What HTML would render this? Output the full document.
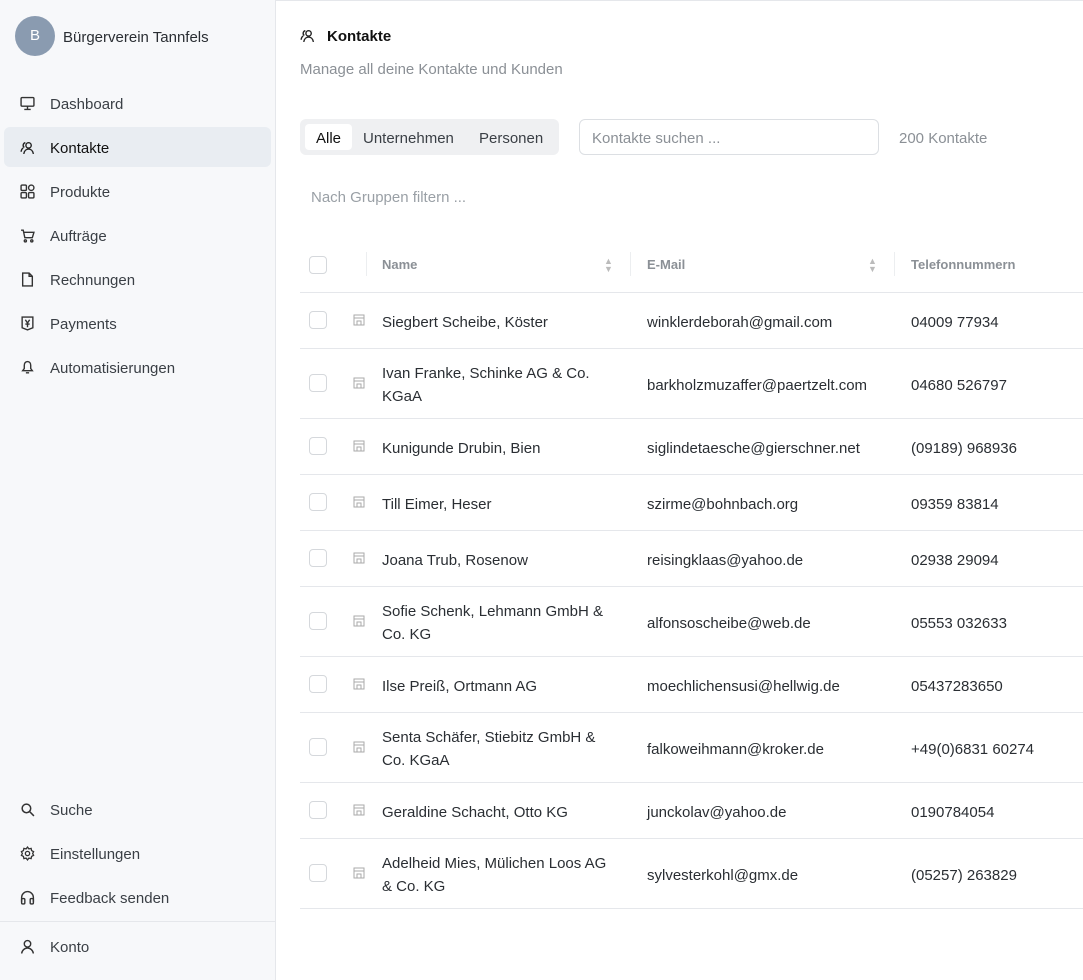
<!DOCTYPE html>
<html><head><meta charset="utf-8"><style>
*{box-sizing:border-box;margin:0;padding:0}
body{width:1083px;height:980px;font-family:"Liberation Sans",sans-serif;color:#1f2328;background:#fff;position:relative;overflow:hidden;font-size:15px}
.sb{position:absolute;left:0;top:0;width:276px;height:980px;background:#f7f8fa;border-right:1px solid #e5e7eb}
.av{position:absolute;left:15px;top:16px;width:40px;height:40px;border-radius:50%;background:#8a9bb0;color:#fff;text-align:center;line-height:40px;font-size:15px}
.org{position:absolute;left:63px;top:29px;font-size:15px;color:#2a2e33}
.nav{position:absolute;left:4px;width:267px;height:40px;border-radius:6px;line-height:44px;padding-left:46px;color:#3a3f45}
.nav svg{position:absolute;left:16px;top:13px;width:15px;height:15px}
.nav.act{background:#e9edf2;color:#111}
.sep{position:absolute;left:0;top:921px;width:275px;border-top:1px solid #e5e7eb}
.topline{position:absolute;left:276px;top:0;right:0;border-top:1px solid #e5e7eb}
.abs{position:absolute}
.muted{color:#8b9096}
.tabs{position:absolute;left:300px;top:119px;width:259px;height:36px;background:#eff0f2;border-radius:6px}
.tab{position:absolute;top:5px;height:26px;line-height:30px;font-size:15px;color:#3a3f45}
.inp{position:absolute;left:579px;top:119px;width:300px;height:36px;border:1px solid #dcdfe3;border-radius:6px;line-height:38px;padding-left:12px;color:#8b9096}
.cb{position:absolute;left:309px;width:18px;height:18px;border:1px solid #d5d8dc;border-radius:4px;background:#fff}
.hl{position:absolute;left:300px;right:0;border-top:1px solid #e5e7eb}
.th{position:absolute;top:257px;font-size:13px;font-weight:bold;color:#8b9096}
.vs{position:absolute;top:252px;height:24px;border-left:1px solid #eceef0}
.cell{position:absolute;font-size:15px;line-height:23px;color:#2a2e33}
</style></head><body>
<div class="topline"></div>
<div class="sb">
<div class="av">B</div><div class="org">Bürgerverein Tannfels</div>
<div class="nav" style="top:83px"><svg viewBox="0 0 14 14" fill="none" stroke="#333" stroke-width="1.3"><rect x="1" y="1.5" width="12" height="8" rx="1"/><path d="M7 9.5v3M4 12.5h6"/></svg>Dashboard</div>
<div class="nav act" style="top:127px"><svg viewBox="0 0 14 14" fill="none" stroke="#222" stroke-width="1.3"><circle cx="8" cy="5" r="2.5"/><path d="M3.5 13c.5-3 2.5-4.5 4.5-4.5s4 1.5 4.5 4.5M5 2.5A2.5 2.5 0 0 0 4 7M1 11c.3-2 1-3 2-3.5"/></svg>Kontakte</div>
<div class="nav" style="top:171px"><svg viewBox="0 0 14 14" fill="none" stroke="#333" stroke-width="1.3"><rect x="1" y="1" width="5" height="5" rx="1"/><rect x="1" y="8" width="5" height="5" rx="1"/><rect x="8" y="8" width="5" height="5" rx="1"/><circle cx="10.5" cy="3.5" r="2.5"/></svg>Produkte</div>
<div class="nav" style="top:215px"><svg viewBox="0 0 14 14" fill="none" stroke="#333" stroke-width="1.3"><path d="M1 2h2l1.5 7h7L13 4H4"/><circle cx="5" cy="12" r="1"/><circle cx="11" cy="12" r="1"/></svg>Aufträge</div>
<div class="nav" style="top:259px"><svg viewBox="0 0 14 14" fill="none" stroke="#333" stroke-width="1.3"><path d="M2.5 1h6l3 3v9h-9z M8.5 1v3h3"/></svg>Rechnungen</div>
<div class="nav" style="top:303px"><svg viewBox="0 0 14 14" fill="none" stroke="#333" stroke-width="1.3"><path d="M2 1h10v10l-5 2-5-2z M5 3.5l2 3 2-3M7 6.5v4M5 7.5h4"/></svg>Payments</div>
<div class="nav" style="top:347px"><svg viewBox="0 0 14 14" fill="none" stroke="#333" stroke-width="1.3"><path d="M7 1.5c-2 0-3 1.5-3 3.5v3L2.5 10h9L10 8V5c0-2-1-3.5-3-3.5zM5.5 12h3"/></svg>Automatisierungen</div>
<div class="nav" style="top:789px"><svg viewBox="0 0 14 14" fill="none" stroke="#333" stroke-width="1.4"><circle cx="6" cy="6" r="4"/><path d="M9 9l4 4"/></svg>Suche</div>
<div class="nav" style="top:833px"><svg viewBox="0 0 14 14" fill="none" stroke="#333" stroke-width="1.2"><circle cx="7" cy="7" r="2"/><path d="M7 1l1.3 1.7 2.1-.5.4 2.1 1.9 1-.9 1.7.9 1.7-1.9 1-.4 2.1-2.1-.5L7 13l-1.3-1.7-2.1.5-.4-2.1-1.9-1 .9-1.7-.9-1.7 1.9-1 .4-2.1 2.1.5z"/></svg>Einstellungen</div>
<div class="nav" style="top:877px"><svg viewBox="0 0 14 14" fill="none" stroke="#333" stroke-width="1.3"><path d="M1.5 11V7a5.5 5.5 0 0 1 11 0v4"/><rect x="1.5" y="8" width="3" height="5" rx="1"/><rect x="9.5" y="8" width="3" height="5" rx="1"/></svg>Feedback senden</div>
<div class="sep"></div>
<div class="nav" style="top:926px"><svg viewBox="0 0 14 14" fill="none" stroke="#333" stroke-width="1.3"><circle cx="7" cy="4.5" r="3"/><path d="M1.5 13.5c.5-3 2.8-5 5.5-5s5 2 5.5 5"/></svg>Konto</div>
</div>

<svg class="abs" style="left:300px;top:28px" width="15" height="15" viewBox="0 0 14 14" fill="none" stroke="#222" stroke-width="1.3"><circle cx="8" cy="5" r="2.5"/><path d="M3.5 13c.5-3 2.5-4.5 4.5-4.5s4 1.5 4.5 4.5M5 2.5A2.5 2.5 0 0 0 4 7M1 11c.3-2 1-3 2-3.5"/></svg>
<div class="abs" style="left:327px;top:28px;font-weight:bold;font-size:15px;color:#111">Kontakte</div>
<div class="abs muted" style="left:300px;top:61px;font-size:15px">Manage all deine Kontakte und Kunden</div>

<div class="tabs">
<div class="tab" style="left:5px;width:47px;background:#fff;border-radius:4px;text-align:center;color:#111">Alle</div>
<div class="tab" style="left:63px">Unternehmen</div>
<div class="tab" style="left:179px">Personen</div>
</div>
<div class="inp">Kontakte suchen ...</div>
<div class="abs muted" style="left:899px;top:130px">200 Kontakte</div>
<div class="abs" style="left:311px;top:189px;color:#9aa0a6">Nach Gruppen filtern ...</div>

<div class="cb" style="top:256px"></div>
<div class="vs" style="left:366px"></div><div class="vs" style="left:630px"></div><div class="vs" style="left:894px"></div>
<div class="th" style="left:382px">Name</div><div class="th" style="left:647px">E-Mail</div><div class="th" style="left:911px">Telefonnummern</div>
<div class="abs" style="left:604px;top:257px;color:#bbb;font-size:9px;line-height:8px">▲<br>▼</div>
<div class="abs" style="left:868px;top:257px;color:#bbb;font-size:9px;line-height:8px">▲<br>▼</div>
<div class="hl" style="top:292px"></div>

<div id="rows"></div>
<script>
var d=[["Siegbert Scheibe, Köster","winklerdeborah@gmail.com","04009 77934",56],
["Ivan Franke, Schinke AG &amp; Co.<br>KGaA","barkholzmuzaffer@paertzelt.com","04680 526797",70],
["Kunigunde Drubin, Bien","siglindetaesche@gierschner.net","(09189) 968936",56],
["Till Eimer, Heser","szirme@bohnbach.org","09359 83814",56],
["Joana Trub, Rosenow","reisingklaas@yahoo.de","02938 29094",56],
["Sofie Schenk, Lehmann GmbH &amp;<br>Co. KG","alfonsoscheibe@web.de","05553 032633",70],
["Ilse Preiß, Ortmann AG","moechlichensusi@hellwig.de","05437283650",56],
["Senta Schäfer, Stiebitz GmbH &amp;<br>Co. KGaA","falkoweihmann@kroker.de","+49(0)6831 60274",70],
["Geraldine Schacht, Otto KG","junckolav@yahoo.de","0190784054",56],
["Adelheid Mies, Mülichen Loos AG<br>&amp; Co. KG","sylvesterkohl@gmx.de","(05257) 263829",70]];
var y=292,h="";
d.forEach(function(r){var c=y+r[3]/2;var two=r[3]>60;
h+='<div class="cb" style="top:'+(c-9)+'px"></div>';
h+='<svg class="abs" style="left:353px;top:'+(c-6)+'px" width="12" height="12" viewBox="0 0 12 12" fill="none" stroke="#aaa" stroke-width="1"><rect x="1" y="1" width="10" height="10"/><path d="M1 4h10M4 11V7h4v4"/></svg>';
h+='<div class="cell" style="left:382px;top:'+(c-(two?21.5:9.5))+'px">'+r[0]+'</div>';
h+='<div class="cell" style="left:647px;top:'+(c-9.5)+'px">'+r[1]+'</div>';
h+='<div class="cell" style="left:911px;top:'+(c-9.5)+'px">'+r[2]+'</div>';
y+=r[3];h+='<div class="hl" style="top:'+y+'px"></div>';});
document.getElementById('rows').innerHTML=h;
</script>
</body></html>
